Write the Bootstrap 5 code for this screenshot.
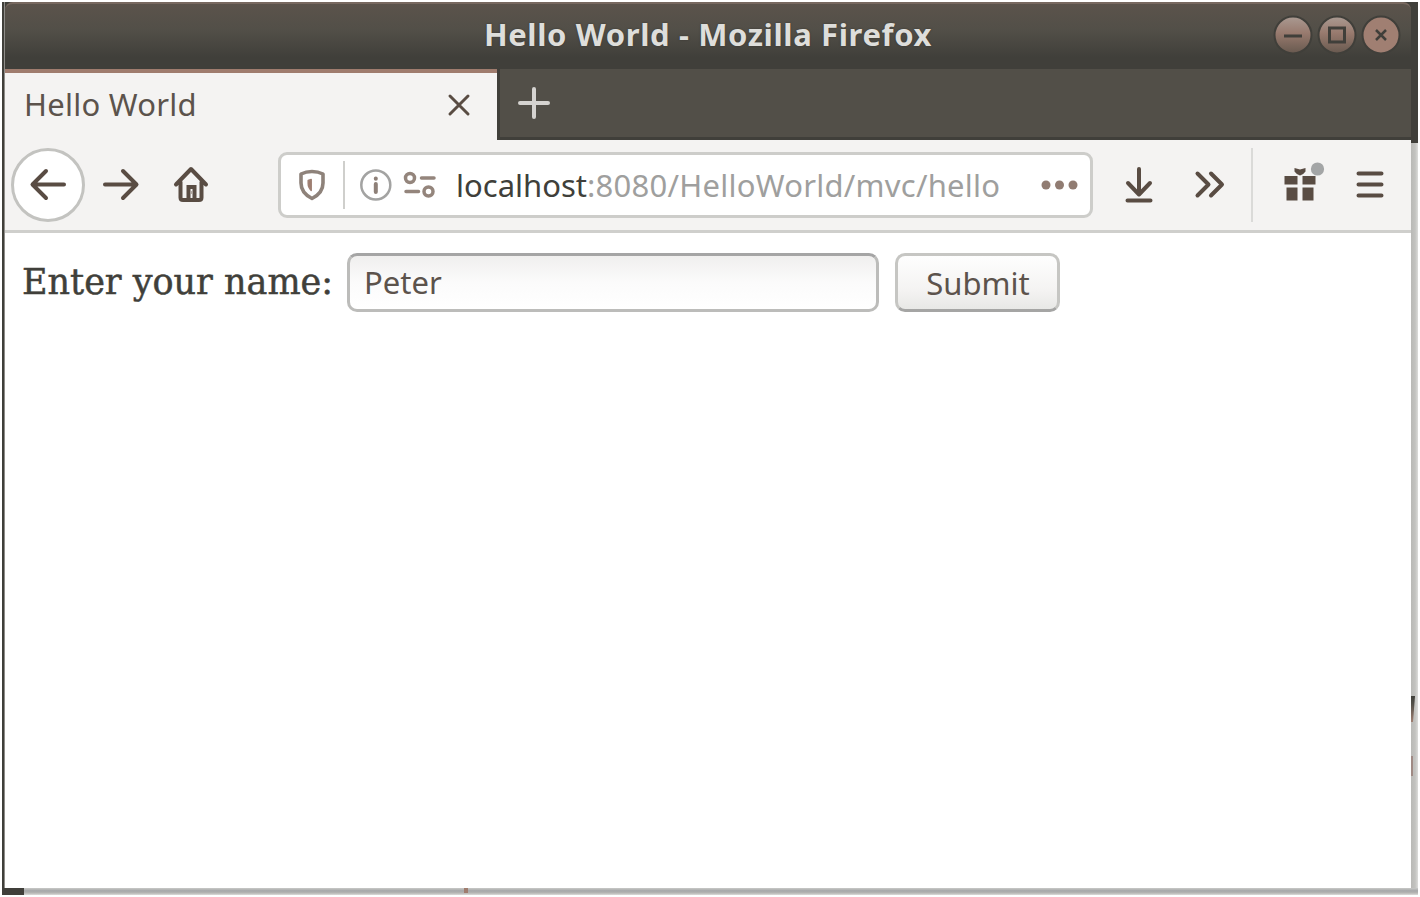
<!DOCTYPE html>
<html lang="en">
<head>
<meta charset="utf-8">
<title>Hello World - Mozilla Firefox</title>
<link href="https://cdn.jsdelivr.net/npm/bootstrap@5.3.0/dist/css/bootstrap.min.css" rel="stylesheet">
<style>
  body { width: 1420px; height: 897px; font-family: "Noto Sans", "Open Sans", sans-serif; color: #5c534c; line-height: 1; }
  svg { display: block; overflow: visible; fill: none; stroke: #594c43; stroke-width: 4; stroke-linecap: round; stroke-linejoin: round; flex: none; }
  .shell { width: 1420px; height: 897px; padding: 2px; }
  .frame-left { width: 3px; background: #403f3a; border-right: 1px solid #8f8d89; }
  .frame-right { width: 7px; }
  .frame-right .fr-dark { height: 141px; background: #403f3a; }
  .frame-right .fr-light { background: linear-gradient(90deg, #b9b9b6, #c3c3c0 60%, #dcdcda); }
  .fr-speck { height: 26px; margin-top: 553px; width: 4px; background: linear-gradient(#403f3a, #524f48 30%, #9f7f72); clip-path: polygon(0 0, 100% 0, 50% 100%, 0 100%); }
  .fr-speck2 { height: 20px; margin-top: 34px; width: 2px; background: #9f8a84; }
  .titlebar { height: 67px; padding-bottom: 4px; background: linear-gradient(#5b534b, #524f48 40%, #403f3a 82%); border-top: 2px solid #77685f; border-radius: 8px 8px 0 0; }
  .titlebar-bg { background: #403f3a; }
  .title-side { width: 136px; }
  .title-text { font-weight: 700; font-size: 31px; letter-spacing: .62px; color: #dededb; white-space: nowrap; text-shadow: 0 0 2px #35342f; }
  .tabstrip { height: 71px; background: #524f48; border-bottom: 3px solid #403f3a; }
  .tab-active { width: 492px; height: 71px; background: #f4f3f2; border-top: 4px solid #9f7c6e; padding: 0 24px 4px 19px; margin-bottom: -3px; box-shadow: 3px 0 0 #403f3a; }
  .ui-text { font-size: 31px; letter-spacing: .25px; white-space: nowrap; }
  .toolbar { height: 93px; background: #f4f3f2; border-bottom: 3px solid #cfcfcc; padding-left: 6px; }
  .back-btn { width: 74px; height: 74px; background: #fff; border: 3px solid #c3c3c0; border-radius: 50%; }
  .tool { width: 70px; height: 74px; }
  .urlbar { width: 815px; height: 66px; margin-left: 53px; background: #fff; border: 3px solid #cdcdca; border-radius: 9px; padding-left: 17px; }
  .url-sep { width: 2px; height: 48px; margin-left: 17px; background: #cfcfcc; }
  .url-text { color: #9f9f9e; margin-left: 17px; }
  .url-text b { color: #403f3a; font-weight: 400; letter-spacing: 0; }
  .tool-download { margin-left: 11px; }
  .tool-sep { width: 2px; height: 74px; margin: 0 13px 0 7px; background: #dadad8; }
  .page-body { padding: 20px 0 0 17px; background: #fff; }
  .page-label { font-family: "DejaVu Serif", serif; font-size: 35px; color: #403f3a; -webkit-text-stroke: .5px #403f3a; width: 325px; white-space: nowrap; }
  .name-field { width: 532px; height: 59px; font-size: 31px; color: #5c534c; border: 3px solid #bcbcba; border-top-color: #a5a5a5; border-radius: 10px; padding: 0 14px 1px; background: linear-gradient(#f0efee, #fbfbfb 50%, #fff); line-height: 1; }
  .send-btn { width: 165px; height: 59px; margin-left: 16px; padding: 1px 0 0 1px; font-size: 31px; color: #5c534c; border: 3px solid #c6c6c3; border-bottom-color: #a5a5a4; border-radius: 10px; background: linear-gradient(#fefefe, #f4f3f2 65%, #e8e8e6); line-height: 1; }
  .frame-bottom { height: 7px; background: linear-gradient(#c9c9c7, #a5a7a8 40%, #b5b5b3 70%, #dcdcda); }
  .fb-dark { width: 22px; background: #403f3a; }
  .fb-speck { width: 4px; height: 5px; margin-left: 440px; background: #9f7c6e; }
</style>
</head>
<body class="m-0 overflow-hidden bg-white">
<div class="shell d-flex flex-column">
  <div class="d-flex flex-grow-1">
    <div class="frame-left"></div>
    <main class="d-flex flex-column flex-grow-1">
      <div class="titlebar-bg">
        <header class="titlebar d-flex align-items-center justify-content-between">
          <div class="title-side"></div>
          <div class="title-text">Hello World - Mozilla Firefox</div>
          <div class="title-side">
            <svg width="136" height="44" viewBox="0 0 136 44">
              <defs><linearGradient id="knob" x1="0" y1="0" x2="0" y2="1"><stop offset="0" stop-color="#aa9a92"/><stop offset=".45" stop-color="#987a6e"/><stop offset="1" stop-color="#67594f"/></linearGradient></defs>
              <g stroke="#403f3a" stroke-width="2">
                <circle cx="18" cy="22" r="18.5" fill="url(#knob)"/><circle cx="62" cy="22" r="18.5" fill="url(#knob)"/><circle cx="106" cy="22" r="18.5" fill="#a07f72"/>
              </g>
              <g stroke="#403f3a" stroke-width="3" stroke-linejoin="miter" stroke-linecap="butt">
                <path d="M9 23h18M54.500 15h15v14h-15z"/><path d="M101 17l10 10M111 17l-10 10" stroke-width="2.500"/>
              </g>
            </svg>
          </div>
        </header>
      </div>
      <div class="tabstrip d-flex">
        <div class="tab-active d-flex align-items-center justify-content-between">
          <span class="ui-text">Hello World</span>
          <svg width="28" height="28" viewBox="0 0 28 28"><path d="M5 5l18 18M23 5L5 23" stroke-width="3"/></svg>
        </div>
        <div class="d-flex align-items-center ps-3 ms-1">
          <svg width="34" height="34" viewBox="0 0 34 34"><path d="M17 3v28M3 17h28" stroke="#d5d3d0"/></svg>
        </div>
      </div>
      <nav class="toolbar d-flex align-items-center">
        <div class="back-btn d-flex align-items-center justify-content-center">
          <svg width="40" height="40" viewBox="0 0 40 40"><path d="M36 19.500H5M18 6L4.500 19.500 18 33"/></svg>
        </div>
        <div class="tool d-flex align-items-center justify-content-center">
          <svg width="40" height="40" viewBox="0 0 40 40"><path d="M5 19.500h31M23 6l13.500 13.500L23 33"/></svg>
        </div>
        <div class="tool d-flex align-items-center justify-content-center">
          <svg width="40" height="40" viewBox="0 0 40 40"><path d="M6 19.500L21 4l15 15.500M10.500 17v15.500q0 2.500 2.500 2.500h16q2.500 0 2.500-2.500V17"/><path d="M18.500 35V22h6v13" stroke-linejoin="miter"/><path d="M21.500 27v1" stroke="#b0a69f" stroke-width="2"/></svg>
        </div>
        <div class="urlbar d-flex align-items-center">
          <svg width="28" height="32" viewBox="0 0 28 32"><path d="M14 2.500q6 0 11 2.500v9q0 10-11 15.500Q3 24 3 14V5q5-2.500 11-2.500z" stroke="#8e827a" stroke-width="3.600"/><path d="M13.200 10.500v11q-3-3-3-7v-3z" fill="#9f7c6e" stroke="#9f8074" stroke-width="1.500"/></svg>
          <div class="url-sep"></div>
          <svg class="ms-3" width="32" height="32" viewBox="0 0 32 32"><circle cx="14.800" cy="16" r="14.500" stroke="#a3a3a2" stroke-width="2.500"/><path d="M14.800 15v8M14.800 9.500v.2" stroke="#8e8078"/></svg>
          <svg class="ms-2 ps-1" width="38" height="32" viewBox="0 0 34 32"><g stroke="#94857c" stroke-width="3.500"><circle cx="5" cy="9" r="4.500"/><circle cx="23.500" cy="22.500" r="4.500"/><path d="M16.500 9H29M1 22.500h12.500"/></g></svg>
          <span class="ui-text url-text"><b>localhost</b>:8080/HelloWorld/mvc/hello</span>
          <svg class="ms-auto me-2 pe-1" width="44" height="10" viewBox="0 0 40 10"><g fill="#917c72" stroke="none"><circle cx="8" cy="5" r="4.500"/><circle cx="21.500" cy="5" r="4.500"/><circle cx="35" cy="5" r="4.500"/></g></svg>
        </div>
        <div class="tool tool-download d-flex align-items-center justify-content-center">
          <svg width="34" height="40" viewBox="0 0 34 40"><path d="M17 4v25M6 18l11 11.500L28 18M5.500 35.500h23"/></svg>
        </div>
        <div class="tool d-flex align-items-center justify-content-center">
          <svg width="34" height="34" viewBox="0 0 34 34"><path d="M5.500 5.500l11 11-11 11M19 5.500l11 11-11 11"/></svg>
        </div>
        <div class="tool-sep"></div>
        <div class="tool d-flex align-items-center justify-content-center">
          <svg width="44" height="44" viewBox="0 0 44 44"><g fill="#594c43" stroke="none"><path d="M5.500 13h13v8.500h-13zM23.500 13h13v8.500h-13zM7.500 24.500h11v13h-11zM23.500 24.500h11v13h-11z"/><path d="M15.500 5l5.500 1.500L26.500 5v3.500q-1 2-5.500 4-4.500-2-5.500-4z"/><circle cx="38.500" cy="6" r="6.600" fill="#a3a5a6"/></g></svg>
        </div>
        <div class="tool d-flex align-items-center justify-content-center">
          <svg width="32" height="32" viewBox="0 0 32 32"><path d="M3.500 4.500h23M3.500 15.500h23M3.500 26.500h23"/></svg>
        </div>
      </nav>
      <section class="page-body flex-grow-1">
        <form class="d-flex align-items-center" onsubmit="return false">
          <label class="page-label" for="who">Enter your name:</label>
          <input class="name-field" id="who" type="text" value="Peter">
          <button class="send-btn" type="button">Submit</button>
        </form>
      </section>
    </main>
    <div class="frame-right d-flex flex-column">
      <div class="fr-dark"></div>
      <div class="fr-light flex-grow-1 overflow-hidden"><div class="fr-speck"></div><div class="fr-speck2"></div></div>
    </div>
  </div>
  <div class="frame-bottom d-flex"><div class="fb-dark"></div><div class="fb-speck"></div></div>
</div>
<script src="https://cdn.jsdelivr.net/npm/bootstrap@5.3.0/dist/js/bootstrap.bundle.min.js"></script>
</body>
</html>
